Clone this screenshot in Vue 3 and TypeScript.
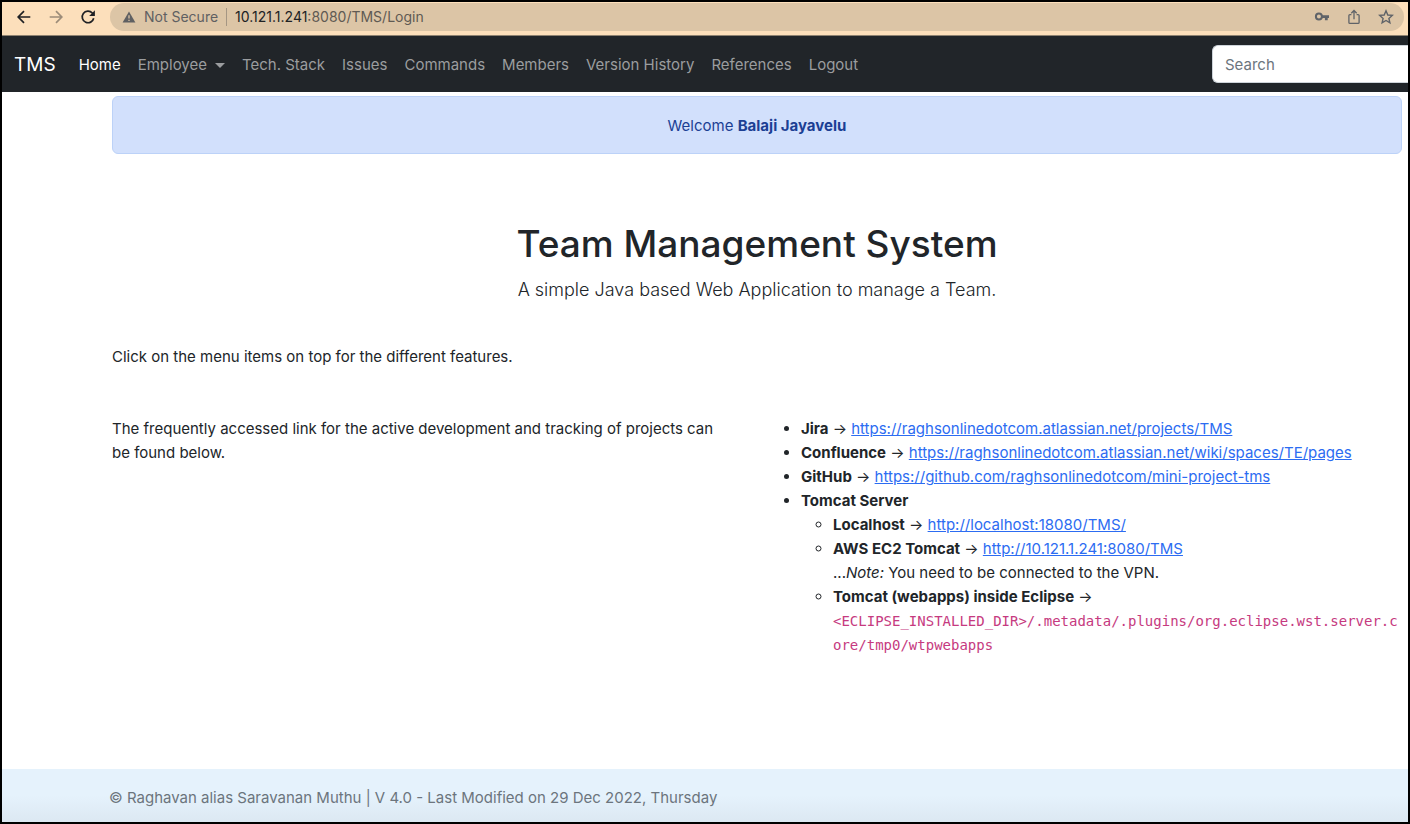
<script setup lang="ts">
interface NavItem {
  label: string
  active?: boolean
  menu?: boolean
}

interface ProjectLink {
  name: string
  url: string
}

const navItems: NavItem[] = [
  { label: 'Home', active: true },
  { label: 'Employee', menu: true },
  { label: 'Tech. Stack' },
  { label: 'Issues' },
  { label: 'Commands' },
  { label: 'Members' },
  { label: 'Version History' },
  { label: 'References' },
  { label: 'Logout' },
]

const projectLinks: ProjectLink[] = [
  { name: 'Jira', url: 'https://raghsonlinedotcom.atlassian.net/projects/TMS' },
  { name: 'Confluence', url: 'https://raghsonlinedotcom.atlassian.net/wiki/spaces/TE/pages' },
  { name: 'GitHub', url: 'https://github.com/raghsonlinedotcom/mini-project-tms' },
]

const webappsPath = '<ECLIPSE_INSTALLED_DIR>/.metadata/.plugins/org.eclipse.wst.server.core/tmp0/wtpwebapps'
</script>

<template>
  <div class="window">
    <div class="toolbar">
      <button type="button" class="tool" aria-label="Back">
        <svg viewBox="0 0 16 16" width="16" height="16"><path d="M14.3 8H2.2M8 2.2 2.2 8 8 13.8" /></svg>
      </button>
      <button type="button" class="tool faded" aria-label="Forward">
        <svg viewBox="0 0 16 16" width="16" height="16"><path d="M1.7 8h12.1M8 2.2 13.8 8 8 13.8" /></svg>
      </button>
      <button type="button" class="tool" aria-label="Reload">
        <svg viewBox="0 0 16 16" width="16" height="16">
          <path d="M13.7 9.2A5.8 5.8 0 1 1 12.3 4L13.6 5.4" />
          <path d="M14.9 1.3V7H9.2Z" class="solid" />
        </svg>
      </button>
      <div class="address">
        <svg class="warning" viewBox="0 0 14 12" width="14" height="12">
          <path d="M7 .4 13.4 11.6H.6Z" fill="#5f6062" />
          <path d="M7 4.2V7.6M7 8.7V10.1" stroke="#dcc5a6" stroke-width="1.3" />
        </svg>
        <span class="insecure">Not Secure</span>
        <span class="url"><span class="host">10.121.1.241</span>:8080/TMS/Login</span>
        <div class="actions">
          <button type="button" class="action" aria-label="Passwords">
            <svg viewBox="0 0 16 16" width="16" height="16">
              <circle cx="4.9" cy="7.6" r="3" fill="none" stroke="#5f6368" stroke-width="2" />
              <path d="M8 6.2H15V9H13.7V11.2H10.9V9H8Z" fill="#5f6368" />
            </svg>
          </button>
          <button type="button" class="action" aria-label="Share">
            <svg viewBox="0 0 16 16" width="16" height="16" fill="none" stroke="#5f6368" stroke-width="1.3">
              <path d="M5.4 5.6H3.9Q2.9 5.6 2.9 6.6V13.4Q2.9 14.4 3.9 14.4H12.1Q13.1 14.4 13.1 13.4V6.6Q13.1 5.6 12.1 5.6H10.6M8 10.2V1.6M5.3 4.2 8 1.5 10.7 4.2" />
            </svg>
          </button>
          <button type="button" class="action" aria-label="Bookmark this page">
            <svg viewBox="0 0 16 16" width="16" height="16" fill="none" stroke="#5f6368" stroke-width="1.4">
              <path d="M8 1.8 9.8 6 14.3 6.4 10.9 9.4 11.9 13.8 8 11.5 4.1 13.8 5.1 9.4 1.7 6.4 6.2 6Z" />
            </svg>
          </button>
        </div>
      </div>
    </div>

    <nav class="navbar">
      <a class="brand" href="#">TMS</a>
      <ul class="menu">
        <li v-for="item in navItems" :key="item.label">
          <button v-if="item.menu" type="button" class="nav-link toggle" aria-haspopup="true">
            {{ item.label }}<span class="caret"></span>
          </button>
          <a v-else class="nav-link" :class="{ active: item.active }" href="#">{{ item.label }}</a>
        </li>
      </ul>
      <form class="search" role="search" @submit.prevent>
        <input type="search" placeholder="Search" aria-label="Search" />
      </form>
    </nav>

    <main class="content">
      <div class="welcome" role="alert">Welcome <strong>Balaji Jayavelu</strong></div>
      <header class="hero">
        <h1>Team Management System</h1>
        <p>A simple Java based Web Application to manage a Team.</p>
      </header>
      <p class="hint">Click on the menu items on top for the different features.</p>
      <div class="columns">
        <p class="intro">The frequently accessed link for the active development and tracking of projects can be found below.</p>
        <ul class="links">
          <li v-for="link in projectLinks" :key="link.name">
            <strong>{{ link.name }}</strong> → <a :href="link.url">{{ link.url }}</a>
          </li>
          <li>
            <strong>Tomcat Server</strong>
            <ul>
              <li><strong>Localhost</strong> → <a href="http://localhost:18080/TMS/">http://localhost:18080/TMS/</a></li>
              <li>
                <strong>AWS EC2 Tomcat</strong> → <a href="http://10.121.1.241:8080/TMS">http://10.121.1.241:8080/TMS</a>
                <br />...<em>Note:</em> You need to be connected to the VPN.
              </li>
              <li><strong>Tomcat (webapps) inside Eclipse</strong> → <code>{{ webappsPath }}</code></li>
            </ul>
          </li>
        </ul>
      </div>
    </main>

    <footer class="footer">© Raghavan alias Saravanan Muthu | V 4.0 - Last Modified on 29 Dec 2022, Thursday</footer>
  </div>
</template>

<style>
body {
  background: #fff;
}
</style>

<style scoped>
* {
  box-sizing: border-box;
}

.window {
  display: flex;
  flex-direction: column;
  min-height: 100vh;
  border: 2px solid #000;
  background: #fff;
  color: #212529;
  font-family: Inter, "Liberation Sans", sans-serif;
  font-size: 15px;
  line-height: 24px;
}

button {
  padding: 0;
  border: 0;
  background: none;
  font: inherit;
  color: inherit;
}

ul,
p,
h1 {
  margin: 0;
}

/* Browser toolbar */
.toolbar {
  display: flex;
  align-items: center;
  gap: 16px;
  height: 34px;
  padding: 0 4px 4px 14px;
  background: #fcdfbb;
  border-bottom: 1px solid #8e8271;
}

.tool {
  display: flex;
  color: #202124;
}

.tool svg {
  fill: none;
  stroke: currentColor;
  stroke-width: 1.7;
}

.tool .solid {
  fill: currentColor;
  stroke: none;
}

.faded {
  color: #9c8c79;
}

.address {
  display: flex;
  flex: 1;
  align-items: center;
  height: 28px;
  margin-left: -2px;
  padding: 0 10px 0 12px;
  border-radius: 14px;
  background: #dcc5a6;
  color: #5f5a53;
  font-size: 14px;
  line-height: 18px;
}

.warning {
  margin-right: 8px;
}

.insecure {
  padding-right: 8px;
  border-right: 1px solid #a59683;
  color: #5f6062;
}

.url {
  padding-left: 8px;
}

.host {
  color: #202124;
}

.actions {
  display: flex;
  gap: 16px;
  margin-left: auto;
}

.action {
  display: flex;
}

/* Site navigation */
.navbar {
  display: flex;
  align-items: center;
  height: 56px;
  padding-left: 12px;
  background: #212529;
}

.brand {
  margin-right: 15px;
  padding-top: 2px;
  color: #fff;
  font-size: 19px;
  line-height: 30px;
  text-decoration: none;
}

.menu {
  display: flex;
  gap: 1px;
  padding: 0;
  list-style: none;
}

.nav-link {
  display: flex;
  align-items: center;
  padding: 9px 8px 7px;
  color: #9b9d9f;
  text-decoration: none;
  white-space: nowrap;
}

.nav-link.active {
  color: #fff;
}

.caret {
  margin-left: 8px;
  border-top: 5px solid;
  border-right: 5px solid transparent;
  border-left: 5px solid transparent;
}

.search {
  width: 196px;
  margin-left: auto;
}

.search input {
  display: block;
  width: 100%;
  height: 38px;
  padding: 6px 12px;
  border: 1px solid #ced4da;
  border-right: 0;
  border-radius: 6px 0 0 6px;
  background: #fff;
  font: inherit;
  appearance: none;
}

.search input::placeholder {
  color: #6c757d;
  opacity: 1;
}

/* Page body */
.content {
  flex: 1;
  padding: 4px 6px 0 110px;
}

.welcome {
  padding: 17px 16px 15px;
  border: 1px solid #bcd2f8;
  border-radius: 6px;
  background: #d2e0fc;
  color: #1c3f94;
  text-align: center;
}

strong {
  font-weight: 700;
}

.hero {
  padding: 66px 0 40px;
  text-align: center;
}

h1 {
  margin-bottom: 7px;
  font-size: 37px;
  font-weight: 500;
  line-height: 48px;
}

.hero p {
  font-size: 18px;
  font-weight: 300;
  line-height: 30px;
}

.columns {
  display: grid;
  grid-template-columns: 1fr 1fr;
  gap: 24px;
  padding-top: 48px;
}

.intro {
  padding-right: 16px;
}

.links,
.links ul {
  padding-left: 32px;
}

.links a {
  color: #2c6cf2;
  text-decoration: underline;
}

code {
  color: #c63a80;
  font-family: "DejaVu Sans Mono", monospace;
  font-size: 14px;
  overflow-wrap: anywhere;
}

.footer {
  padding: 17px 107px 12px;
  background: linear-gradient(#e5f2fc 50%, #dce8f2);
  color: #6c757d;
}
</style>
